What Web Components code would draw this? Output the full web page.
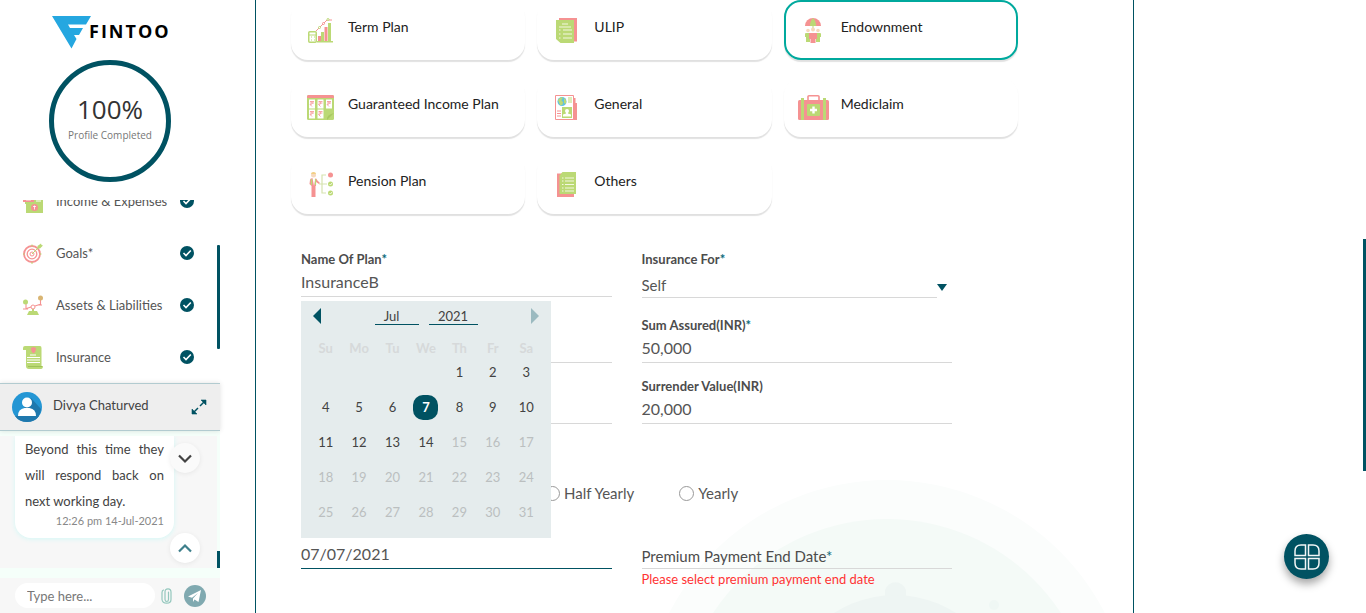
<!DOCTYPE html>
<html lang="en">
<head>
<meta charset="utf-8">
<title>Fintoo - Insurance</title>
<style>
  html, body { margin: 0; height: 100%; overflow: hidden; }
  body { font-family: Lato, "Open Sans", sans-serif; font-size: 14px; color: #424242; background: #fff;
    --teal: #005262; --line: #d8d8d8; }
</style>
</head>
<body>
<fin-app>
  <fin-sidebar slot="side"></fin-sidebar>
  <fin-insurance></fin-insurance>
</fin-app>
<script>
const G = '#bbd975', P = '#f59292';
const rupee = (x, y) => `<path d="M${x} ${y}h4m-4 1.5h4m-3-1.5q3 2.6-1 3l2 2" fill="none" stroke="${P}" stroke-width=".8"/>`;
const note = (x, y) => `<path d="M${x} ${y}h6v9h-6z" fill="#fff"/>` + rupee(x + 1, y + 2);
const ICONS = {
  term: [25, 25, `<path d="M10 18h3v6h-3z M16.500 9h3v15h-3z" fill="${P}"/><path d="M13 14h3v10h-3z M20 5h3v19h-3z M9 23h16v1.500H9z" fill="${G}"/><rect x=".75" y="13.750" width="7.500" height="10.500" rx="1" fill="none" stroke="${G}" stroke-width="1.500"/><path d="M1 17h8M3 19h1M6 19h1M3 22h1M6 22h1" stroke="${G}"/><path d="M8 13l3.500-3.500 4-4L19 2h5" fill="none" stroke="${P}"/><circle cx="11.500" cy="9.500" r="1" fill="#fff" stroke="${G}"/><circle cx="15.500" cy="5.500" r="1" fill="#fff" stroke="${P}"/><circle cx="20" cy="1.500" r="1" fill="#fff" stroke="${G}"/>`],
  ulip: [21, 25, `<path d="M3 0h18v23.500H3z" fill="${P}"/><path d="M0 2h18v23H4.500L0 21z" fill="${G}"/><path d="M6 6h6M3 9h12M3 12h1.500M7 12h9M3 16h1.500M7 16h9M3 20h1.500M7 20h9" stroke="#f3f8e2" stroke-width="1.200"/>`],
  endow: [16, 25, `<path d="M0 8a8 8 0 0 1 16 0z" fill="${P}"/><path d="M5 8q0-5 3-8q3 3 3 8z" fill="${G}"/><path d="M8 8v4" stroke="${G}"/><circle cx="8" cy="11.500" r="2" fill="#f7d9bd"/><circle cx="3" cy="12.500" r="1.800" fill="#f7d9bd"/><circle cx="13" cy="12.500" r="1.800" fill="#f7d9bd"/><path d="M0 16q0-1 1-1h4v9H1v-5H0zM11 15h4q1 0 1 1v3h-1v5h-4z" fill="${G}"/><path d="M4 15h8v6h-1.500v4h-5v-4H4z" fill="${P}"/>`],
  income: [27, 25, `<rect width="27" height="25" rx="1.500" fill="${G}"/><path d="M0 3V1.500Q0 0 1.500 0h24Q27 0 27 1.500V3z" fill="${P}"/>` + note(2, 4.5) + note(10.5, 4.5) + note(19, 4.5) + note(2, 14.5) + note(10.5, 14.5) + `<path d="M20 25q-1-5 7-7z" fill="#a9c962"/>`],
  general: [23, 25, `<path d="M18 3h2.500v5H22v17h-4z" fill="${P}"/><path d="M.5.5h18v24H.5z" fill="#fff" stroke="${P}"/><circle cx="7" cy="6.500" r="4.500" fill="#62c3dc"/><path d="M3 5q3-4 5-2q-3 2 0 4q0 4-3 3zM9 3q3 2 2 6l-2-1z" fill="${G}"/><path d="M13 3h4M13 5h4M13 7h4" stroke="${G}"/><path d="M2 16h4M2 18.500h4M2 21h4" stroke="${P}"/><path d="M7 12h10v11H7z" fill="${G}"/><circle cx="12" cy="16" r="2" fill="#fff"/><path d="M11 17h2v1.500l3 1v2H8v-2l3-1z" fill="#fff"/>`],
  medi: [31, 25, `<path d="M10 5V1.500Q10 .75 11 .75h9Q21 .75 21 1.500V5" fill="none" stroke="${P}" stroke-width="1.600"/><rect y="5" width="31" height="20" rx="1.500" fill="${P}"/><path d="M3 3h3v22H3zM25 3h3v22h-3z" fill="${G}"/><rect x="9" y="9" width="13" height="12" rx="1" fill="${G}"/><path d="M14.300 11.500h2.400v2.300H19v2.400h-2.300v2.300h-2.400v-2.300H12v-2.400h2.300z" fill="#fff"/>`],
  pension: [24, 25, `<circle cx="4.500" cy="3" r="2.500" fill="#f7d9bd"/><path d="M2 2q0-2 2.500-2T7 2z" fill="#f2cf84"/><path d="M1 8q0-2 3.500-2T8 8l3 3-1 1-3-2v4h-.5v11h-4V14l-2-2z" fill="${P}"/><path d="M3.500 6L5 14l1.500-8z" fill="#fff"/><path d="M2.500 7v6M6.500 7v6" stroke="${G}" stroke-width="1.200"/><path d="M10 12h8M17 3h-4v18h4" fill="none" stroke="#d6e3b0" stroke-width="1.200"/><circle cx="21.500" cy="3" r="2.500" fill="${P}"/><circle cx="21.500" cy="12" r="2.500" fill="${G}"/><circle cx="21.500" cy="21" r="2.500" fill="${G}"/><path d="M20.500 12l1 1 1.500-2M20.500 21l1 1 1.500-2" fill="none" stroke="#fff" stroke-width=".8"/>`],
  others: [19, 25, `<path d="M0 1.500h17V25H0z" fill="${P}"/><path d="M5.500 0H19v22H2.500V3.500z" fill="${G}"/><path d="M5 6h1.500M8 6h9M5 9h1.500M8 9h9M5 12.500h1.500M8 12.500h9M5 16h1.500M8 16h9M5 19h1.500M8 19h9" stroke="#f3f8e2" stroke-width="1.100"/>`],
  money: [20, 24, `<path d="M2 6h18v18H3v-9H2z" fill="${G}"/><path d="M0 6h11v7H0z" fill="${P}"/><path d="M3 11h5" stroke="#fff" stroke-width=".8"/><path d="M13 10h5M13 12h5" stroke="#fff"/><circle cx="11.500" cy="18.500" r="3.500" fill="${P}"/><path d="M10 17.500h3M11.500 16.500v4" stroke="#fff" stroke-width=".8"/>`],
  goals: [20, 20, `<circle cx="9" cy="11" r="8" fill="#fff" stroke="${P}" stroke-width="1.800"/><circle cx="9" cy="11" r="4.800" fill="#fff" stroke="${P}" stroke-width="1.300"/><circle cx="9" cy="11" r="2" fill="#fff" stroke="${P}"/><path d="M9 1.500v2M9 19v2M0 11h1.500M17 11h1.500M9 11l8-8" stroke="${G}"/><path d="M14.500 5.500V3L18 .5l.5 1.500 1.500.5L17 5.500z" fill="${G}"/>`],
  assets: [20, 20, `<path d="M9 12h2v4h3l2 4H4l2-4h3z" fill="${G}"/><path d="M2 14l6-2M12 11l6-2M3 8v5M17.500 4v6M0 14h5M15 10h4" stroke="${P}" stroke-width="1.100"/><circle cx="10" cy="12" r="2" fill="#fff" stroke="${P}"/><circle cx="2.500" cy="7" r="2.500" fill="${G}"/><circle cx="17.500" cy="3" r="2.500" fill="#d9b573"/>`],
  insure: [20, 23, `<path d="M0 2q0-2 2-2h15q1.500 0 1.500 2v18H20q0 3-2 3H6q-3 0-3-3V4H0z" fill="${G}"/><path d="M8 2l2.500-1L13 2q0 4-2.500 5.500Q8 6 8 2z" fill="${P}"/><path d="M7 9h6M4 11.500h13M4 14h13M4 16.500h13" stroke="#fff" stroke-width="1.100"/><path d="M5 20.500h14" stroke="#9fc25a"/>`],
  check: [14, 14, `<circle cx="7" cy="7" r="7" fill="#005262"/><path d="M3.500 7l2.500 2.500 4.800-5" fill="none" stroke="#fff" stroke-width="1.600"/>`],
  logo: [40, 33, `<path d="M0 0h39l-5 8.500H16l2 3.500h13l-4 7h-5l2.500 4-5 9.500z" fill="#25a7e0"/>`],
  user: [30, 30, `<circle cx="15" cy="15" r="15" fill="#2496d4"/><path d="M19 6l10 11q-1 8-7 11L6 25z" fill="#1f78ad"/><path d="M3 24q12-2 24 0-4 6-12 6T3 24z" fill="#1f78ad"/><circle cx="15" cy="10.500" r="5" fill="#fff"/><path d="M6 24q0-7 6.500-8h5q6.500 1 6.500 8z" fill="#fff"/>`],
  expand: [14, 14, `<path d="M9 0h5v5zM0 9v5h5z" fill="#005262" stroke="#005262" stroke-linejoin="round" stroke-width=".6"/><path d="M12 2L8 6M6 8l-4 4" stroke="#005262" stroke-width="1.500"/>`],
  down: [14, 9, `<path d="M1 1.500l6 6 6-6" fill="none" stroke="#424242" stroke-width="2.200"/>`],
  up: [14, 9, `<path d="M1 7.500l6-6 6 6" fill="none" stroke="#3e7f8b" stroke-width="2.200"/>`],
  clip: [11, 16, `<path d="M7.500 4v7.500q0 2-1.700 2T4 11.500V4q0-3.200 3-3.200t3 3.200v7.500q0 3.700-4.300 3.700T1 11.500V4.500q0-2 1.500-2.500" fill="none" stroke="#93c7bd" stroke-width="1.200" stroke-linecap="round"/>`],
  send: [22, 22, `<circle cx="11" cy="11" r="11" fill="#80a9b0"/><path d="M4 11.500L17 5l-2.500 12-4-2.500L9 17v-3.500l5-5.500-6 4.800z" fill="#fff"/>`],
  grid: [26, 26, `<g fill="none" stroke="#f2f6f6" stroke-width="1.500"><path d="M11.500 1v10.500H1V7q0-6 6-6zM14.500 1v10.500H25V7q0-6-6-6zM11.500 25V14.500H1V19q0 6 6 6zM14.500 25V14.500H25V19q0 6-6 6z"/></g>`]
};

function define(name, css, html) {
  const tpl = document.createElement('template');
  customElements.define(name, class extends HTMLElement {
    connectedCallback() {
      if (this.shadowRoot) return;
      tpl.innerHTML = `<style>*{box-sizing:border-box}button,input,select{font:inherit;color:inherit;margin:0;padding:0;border:0;border-radius:0;background:none;outline:0}button{cursor:pointer}${css}</style>` +
        (typeof html === 'function' ? html(k => this.getAttribute(k) || '', this) : html);
      this.attachShadow({ mode: 'open' }).append(tpl.content.cloneNode(true));
    }
  });
}

define('fin-icon', ':host{display:block;flex:none}svg{display:block;overflow:visible}', a => {
  const [w, h, body] = ICONS[a('name')];
  return `<svg width="${w}" height="${h}" viewBox="0 0 ${w} ${h}" aria-hidden="true">${body}</svg>`;
});

define('fin-app', `
  :host{display:grid;grid-template-columns:255px minmax(0,879fr) minmax(0,232fr);height:100vh;overflow:hidden}
  main{position:relative;border:solid var(--teal);border-width:0 1px;overflow:hidden}
  .thumb{position:fixed;right:0;top:39%;width:3px;height:232px;background:var(--teal)}
  .fab{position:fixed;right:37px;bottom:34px;width:45px;height:45px;border-radius:50%;background:var(--teal);display:grid;place-items:center;box-shadow:0 5px 8px rgba(0,0,0,.35)}
`, `<slot name="side"></slot><main><slot></slot></main>
  <div class="thumb"></div><button class="fab" aria-label="Open menu"><fin-icon name="grid"></fin-icon></button>`);

define('fin-nav-item', `
  :host{display:block}
  a{display:grid;grid-template-columns:33px 1fr 14px;align-items:center;height:52px;padding:0 26px 0 23px;color:#555;text-decoration:none;font-size:13px;line-height:20px}
`, a => `<a href="#"><fin-icon name="${a('icon')}"></fin-icon><slot></slot><fin-icon name="check"></fin-icon></a>`);

define('fin-sidebar', `
  :host{display:flex;flex-direction:column;height:100vh;width:220px}
  .logo{display:flex;align-items:flex-start;padding:16px 0 0 52px;height:60px}
  .logo b{font:700 18px/22px "Open Sans",sans-serif;letter-spacing:2px;color:#000;margin:4px 0 0 -3px}
  .ring{width:122px;height:122px;margin-left:49px;border:5px solid var(--teal);border-radius:50%;text-align:center;padding-top:29px;flex:none}
  .pct{font:400 26px/30px "Open Sans",sans-serif;color:#333}
  .done{font:400 10px/22px "Open Sans",sans-serif;color:#777}
  nav{position:relative;height:183px;margin-top:18px;overflow:hidden;flex:none;display:flex;flex-direction:column;justify-content:flex-end}
  nav .thumb{position:absolute;right:0;top:45px;width:3px;height:104px;background:var(--teal);border-radius:1px}
`, `<div class="logo"><fin-icon name="logo"></fin-icon><b>FINTOO</b></div>
  <div class="ring"><div class="pct">100%</div><div class="done">Profile Completed</div></div>
  <nav><fin-nav-item icon="money">Income &amp; Expenses</fin-nav-item><fin-nav-item icon="goals">Goals*</fin-nav-item>
  <fin-nav-item icon="assets">Assets &amp; Liabilities</fin-nav-item><fin-nav-item icon="insure">Insurance</fin-nav-item><div class="thumb"></div></nav>
  <fin-chat></fin-chat>`);

define('fin-chat', `
  :host{display:flex;flex-direction:column;flex:1;min-height:0;background:#f5fffa;font-size:13px}
  header{display:flex;align-items:center;height:48px;padding:0 14px 0 12px;background:#eee;border:solid #b2cbd0;border-width:1px 0;box-shadow:0 0 5px rgba(0,0,0,.12);flex:none}
  header span{flex:1;padding-left:11px;line-height:20px;margin-bottom:4px}
  .body{position:relative;flex:1;min-height:0;margin-top:5px;margin-right:3px;padding:0 43px 30px 15px;background:#f7f7f7;overflow:hidden;display:flex;flex-direction:column;justify-content:flex-end}
  .msg{background:#fff;border-radius:0 0 16px 16px;box-shadow:0 1px 5px #d3f8f6;padding:0 10px 10px}
  p{margin:0;line-height:26px;text-align:justify}
  time{display:block;text-align:right;font-size:11px;line-height:14px;color:#888}
  .round{position:absolute;left:170px;width:30px;height:30px;border-radius:50%;background:#fafafa;display:grid;place-items:center;box-shadow:0 1px 5px rgba(0,0,0,.07)}
  .dn{top:7px}.up{bottom:5px;background:#fff}
  .wrap{position:relative;display:flex;flex:1;min-height:0}
  .thumb{position:absolute;right:0;bottom:0;width:3px;height:17px;background:var(--teal)}
  form{display:flex;align-items:center;margin-top:10px;height:35px;padding:0 14px 0 15px;background:#f7f7f7;flex:none}
  input{flex:1;min-width:0;height:25px;border-radius:13px;background:#fff;padding:0 12px}
  input::placeholder{color:#777}
  .clip{margin:0 12px 0 6px}
`, `<header><fin-icon name="user"></fin-icon><span>Divya Chaturved</span><button aria-label="Expand chat"><fin-icon name="expand"></fin-icon></button></header>
  <div class="wrap"><div class="body"><div class="msg"><p>Beyond this time they will respond back on next working day.</p><time>12:26 pm 14-Jul-2021</time></div>
  <button class="round dn" aria-label="Scroll down"><fin-icon name="down"></fin-icon></button>
  <button class="round up" aria-label="Scroll up"><fin-icon name="up"></fin-icon></button></div><div class="thumb"></div></div>
  <form><input aria-label="Message" placeholder="Type here..."><button type="button" class="clip" aria-label="Attach"><fin-icon name="clip"></fin-icon></button><button type="button" aria-label="Send"><fin-icon name="send"></fin-icon></button></form>`);

define('fin-plan', `
  :host{display:block}
  button{display:grid;grid-template-columns:57px 1fr;align-items:start;width:100%;height:60px;padding:17px 0 0;text-align:left;background:#fff;border-radius:17px;box-shadow:0 2px 1px rgba(0,0,0,.12);color:#222;font-size:14px;line-height:20px}
  :host([selected]) button{outline:2px solid #00a99d;outline-offset:-2px}
  fin-icon{justify-self:center;margin:1px 0 0 2px}
`, a => `<button><fin-icon name="${a('icon')}"></fin-icon><span><slot></slot></span></button>`);

define('fin-field', `
  :host{display:block}
  label{display:block;font-weight:700;font-size:13px;line-height:19px;color:#4c4c4c}
  i{font-style:normal;color:#0a6a7a}
  input{display:block;width:100%;height:28px;padding-bottom:2px;border-bottom:1px solid var(--line);font-size:16px;color:#555}
  .sel{display:flex;align-items:center}
  select{appearance:none;flex:1;height:29px;padding-top:4px;border-bottom:1px solid var(--line);font-size:15px;color:#555}
  svg{margin:8px 5px 0 0}
`, a => {
  const req = a('required') ? '<i>*</i>' : '';
  const control = a('kind') === 'select'
    ? `<div class="sel"><select id="c"><option>${a('value')}</option></select><svg width="10" height="7" aria-hidden="true"><path d="M0 0h10L5 7z" fill="#005262"/></svg></div>`
    : `<input id="c" value="${a('value')}">`;
  return `<label for="c">${a('label') || '&nbsp;'}${req}</label>${control}`;
});

const weeks = [['', '', '', '', 1, 2, 3], [4, 5, 6, 7, 8, 9, 10], [11, 12, 13, 14, 15, 16, 17], [18, 19, 20, 21, 22, 23, 24], [25, 26, 27, 28, 29, 30, 31]];
define('fin-calendar', `
  :host{display:block;width:250px;height:237px;padding:0 8px;background:#e5eced;font-size:13px}
  .bar{display:flex;align-items:center;height:34px;padding:0 4px}
  .bar button{width:8px;height:16px;margin-bottom:4px}
  .bar svg{display:block}
  .bar div{flex:1;display:flex;justify-content:center;gap:10px}
  select{appearance:none;height:18px;border-bottom:1px solid var(--teal);text-align:center;line-height:16px}
  .bar div{margin-bottom:4px}
  .m{width:44px;padding-right:10px}.y{width:49px}
  table{width:100%;border-collapse:collapse;table-layout:fixed;text-align:center}
  th{height:25px;padding:0;font-weight:700;color:#d6d9da}
  td{height:35px;padding:0 0 10px;line-height:25px}
  b{display:block;width:25px;height:25px;margin:auto;border-radius:10px;background:var(--teal);color:#fff}
  .off{color:#bbbfc0}
`, `<div class="bar"><button type="button" aria-label="Previous month"><svg width="8" height="16"><path d="M8 0v16L0 8z" fill="#005262"/></svg></button>
  <div><select class="m" aria-label="Month"><option>Jul</option></select><select class="y" aria-label="Year"><option>2021</option></select></div>
  <button type="button" aria-label="Next month"><svg width="8" height="16"><path d="M0 0v16l8-8z" fill="#9bbac0"/></svg></button></div>
  <table><thead><tr>${['Su', 'Mo', 'Tu', 'We', 'Th', 'Fr', 'Sa'].map(d => `<th scope="col">${d}</th>`).join('')}</tr></thead>
  <tbody>${weeks.map(w => `<tr>${w.map(d => `<td${d > 14 ? ' class="off"' : ''}>${d === 7 ? '<b>7</b>' : d}</td>`).join('')}</tr>`).join('')}</tbody></table>`);

define('fin-insurance', `
  :host{display:block}
  .art{position:absolute;right:0;bottom:0;z-index:-1}
  .plans{display:grid;grid-template-columns:repeat(3,minmax(0,1fr));gap:17px 12px;padding:0 115px 0 35px}
  form{padding:36px 181px 0 45px}
  .grid{display:grid;grid-template-columns:repeat(2,minmax(0,1fr));gap:14px 30px;grid-template-rows:52px}
  .radios{display:flex;gap:45px;margin-top:61px;padding-left:244px}
  .radios label{display:flex;align-items:center;gap:4px;height:16px;font-size:15px;line-height:16px;white-space:nowrap;color:#555}
  .radios input{appearance:none;width:15px;height:15px;border:1px solid #999;border-radius:50%;background:#fff}
  .dates{display:grid;grid-template-columns:repeat(2,minmax(0,1fr));column-gap:30px;margin-top:40px}
  .start,.end{position:relative}
  .dates input{display:block;width:100%;height:28px;padding-bottom:2px;border-bottom:1px solid var(--line);font-size:16px;color:#555}
  .start input{border-color:var(--teal)}
  fin-calendar{position:absolute;left:0;bottom:calc(100% - 25px);z-index:2}
  .end{display:grid}
  .end input,.end label{grid-area:1/1}
  .end label{font-size:15px;line-height:24px;padding-top:3px;color:#4c4c4c}
  .end i{font-style:normal;color:#0a6a7a}
  .err{grid-row:2;font-size:13px;line-height:20px;color:#f33}
  .date{position:relative}
  .date fin-calendar{bottom:calc(100% + 3px)}
`, `<svg class="art" width="470" height="134" aria-hidden="true"><g transform="translate(-663 -479)"><circle cx="887" cy="725" r="245" fill="#fbfdfc"/><circle cx="887" cy="727" r="208" fill="#f4faf7"/><path d="M885 600v-10a11 11 0 0 1 21 0v10z" fill="#eef5f3"/><circle cx="895" cy="707" r="112" fill="#eef5f3"/><circle cx="994" cy="605" r="5" fill="#eff7f4"/></g></svg>
  <section class="plans">
    <fin-plan icon="term">Term Plan</fin-plan><fin-plan icon="ulip">ULIP</fin-plan><fin-plan icon="endow" selected>Endownment</fin-plan>
    <fin-plan icon="income">Guaranteed Income Plan</fin-plan><fin-plan icon="general">General</fin-plan><fin-plan icon="medi">Mediclaim</fin-plan>
    <fin-plan icon="pension">Pension Plan</fin-plan><fin-plan icon="others">Others</fin-plan>
  </section>
  <form>
    <div class="grid">
      <fin-field label="Name Of Plan" required="1" value="InsuranceB"></fin-field>
      <fin-field kind="select" label="Insurance For" required="1" value="Self"></fin-field>
      <fin-field></fin-field><fin-field label="Sum Assured(INR)" required="1" value="50,000"></fin-field>
      <fin-field></fin-field><fin-field label="Surrender Value(INR)" value="20,000"></fin-field>
    </div>
    <div class="radios"><label><input type="radio" name="freq">Half Yearly</label><label><input type="radio" name="freq">Yearly</label></div>
    <div class="dates">
      <div class="start"><div class="date"><input aria-label="Premium Payment Start Date" value="07/07/2021"><fin-calendar></fin-calendar></div></div>
      <div class="end"><input id="end"><label for="end">Premium Payment End Date<i>*</i></label><div class="err">Please select premium payment end date</div></div>
    </div>
  </form>`);
</script>
</body>
</html>
